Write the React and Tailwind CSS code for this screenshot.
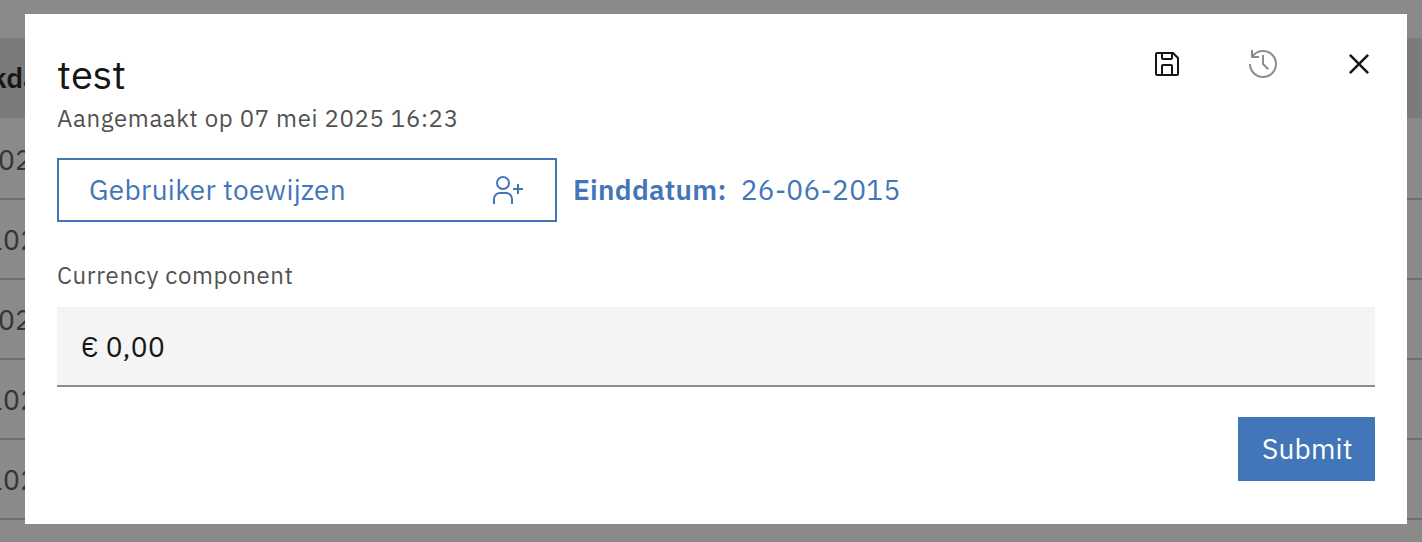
const rows = [
  { text: "02", offset: "-ml-[2px]" },
  { text: "102", offset: "-ml-[14px]" },
  { text: "02", offset: "-ml-[2px]" },
  { text: "102", offset: "-ml-[14px]" },
  { text: "102", offset: "-ml-[14px]" },
];

function CarbonIcon({ size = 32, className = "", children }) {
  return (
    <svg
      width={size}
      height={size}
      viewBox="0 0 32 32"
      fill="currentColor"
      aria-hidden="true"
      className={`shrink-0 ${className}`}
    >
      {children}
    </svg>
  );
}

function SaveIcon() {
  return (
    <CarbonIcon>
      <path d="M27.71,9.29l-5-5A1,1,0,0,0,22,4H6A2,2,0,0,0,4,6V26a2,2,0,0,0,2,2H26a2,2,0,0,0,2-2V10A1,1,0,0,0,27.71,9.29ZM12,6h8v4H12Zm8,20H12V18h8Zm2,0V18a2,2,0,0,0-2-2H12a2,2,0,0,0-2,2v8H6V6h4v4a2,2,0,0,0,2,2h8a2,2,0,0,0,2-2V6.41l4,4V26Z" />
    </CarbonIcon>
  );
}

function HistoryIcon() {
  return (
    <CarbonIcon>
      <path d="M20.59 22 15 16.41 15 7 17 7 17 15.58 22 20.59 20.59 22z" />
      <path d="M16,2A13.94,13.94,0,0,0,6,6.23V2H4v8h8V8H7.08A12,12,0,1,1,4,16H2A14,14,0,1,0,16,2Z" />
    </CarbonIcon>
  );
}

function CloseIcon() {
  return (
    <CarbonIcon size={40}>
      <path d="M17.4141 16 24 9.4141 22.5859 8 16 14.5859 9.4143 8 8 9.4141 14.5859 16 8 22.5859 9.4143 24 16 17.4141 22.5859 24 24 22.5859z" />
    </CarbonIcon>
  );
}

function UserFollowIcon() {
  return (
    <CarbonIcon>
      <path d="M32 14 28 14 28 10 26 10 26 14 22 14 22 16 26 16 26 20 28 20 28 16 32 16 32 14z" />
      <path d="M12,4A5,5,0,1,1,7,9a5,5,0,0,1,5-5m0-2a7,7,0,1,0,7,7A7,7,0,0,0,12,2Z" />
      <path d="M22,30H20V25a5,5,0,0,0-5-5H9a5,5,0,0,0-5,5v5H2V25a7,7,0,0,1,7-7h6a7,7,0,0,1,7,7Z" />
    </CarbonIcon>
  );
}

function TaskTable() {
  return (
    <div className="h-full pt-[38px] whitespace-nowrap">
      <div className="flex h-20 items-center bg-[#7b7b7b] text-[28px] font-semibold text-[#161616]">
        <span className="-ml-[9px]">kda</span>
      </div>
      {rows.map((row, i) => (
        <div
          key={i}
          className="flex h-20 items-center border-t-2 border-[#6e6e6e] pt-[2px] text-[28px] tracking-[0.32px] text-[#343434] nth-2:border-transparent"
        >
          <span className={row.offset}>{row.text}</span>
        </div>
      ))}
      <div className="border-t-2 border-[#6e6e6e]" />
    </div>
  );
}

function TaskModal() {
  return (
    <div
      role="dialog"
      className="absolute top-[14px] left-[25px] flex h-[510px] w-[1382px] flex-col bg-white px-8 whitespace-nowrap"
    >
      <header className="flex h-[122px] justify-between">
        <div className="pt-9">
          <h1 className="text-[40px] leading-[48px] text-[#161616]">test</h1>
          <p className="mt-1 text-[24px] leading-8 tracking-[0.64px] text-[#525252]">
            Aangemaakt op 07 mei 2025 16:23
          </p>
        </div>
        <div className="mt-[30px] -mr-1 flex h-10 items-center text-[#161616]">
          <button aria-label="Opslaan">
            <SaveIcon />
          </button>
          <button aria-label="Geschiedenis" className="ml-16 text-[#8d8d8d]">
            <HistoryIcon />
          </button>
          <button aria-label="Sluiten" className="ml-[60px]">
            <CloseIcon />
          </button>
        </div>
      </header>

      <div className="mt-[22px] flex h-16 items-center text-[28px] text-[#4376b8]">
        <button className="flex h-16 w-[500px] items-center justify-between border-2 border-[#4376b8] pr-8 pl-[30px]">
          <span className="tracking-[0.32px]">Gebruiker toewijzen</span>
          <UserFollowIcon />
        </button>
        <span className="ml-4 font-semibold tracking-[0.28px]">Einddatum:</span>
        <span className="ml-[14px] tracking-[0.32px]">26-06-2015</span>
      </div>

      <label className="mt-[37px] text-[24px] leading-8 tracking-[0.64px] text-[#525252]">
        Currency component
      </label>
      <div className="mt-4 flex h-20 items-center border-b-2 border-[#8d8d8d] bg-[#f4f4f4] pt-px pl-6 text-[28px] tracking-[0.32px] text-[#161616]">
        € 0,00
      </div>

      <button className="mt-[30px] flex h-16 w-[137px] items-center justify-start self-end bg-[#4376b8] pl-6 text-[28px] tracking-[0.16px] text-white">
        Submit
      </button>
    </div>
  );
}

export default function App() {
  return (
    <div className="relative h-[542px] w-[1422px] overflow-hidden bg-[#8a8a8a] font-['IBM_Plex_Sans','Noto_Sans',sans-serif]">
      <TaskTable />
      <TaskModal />
    </div>
  );
}
